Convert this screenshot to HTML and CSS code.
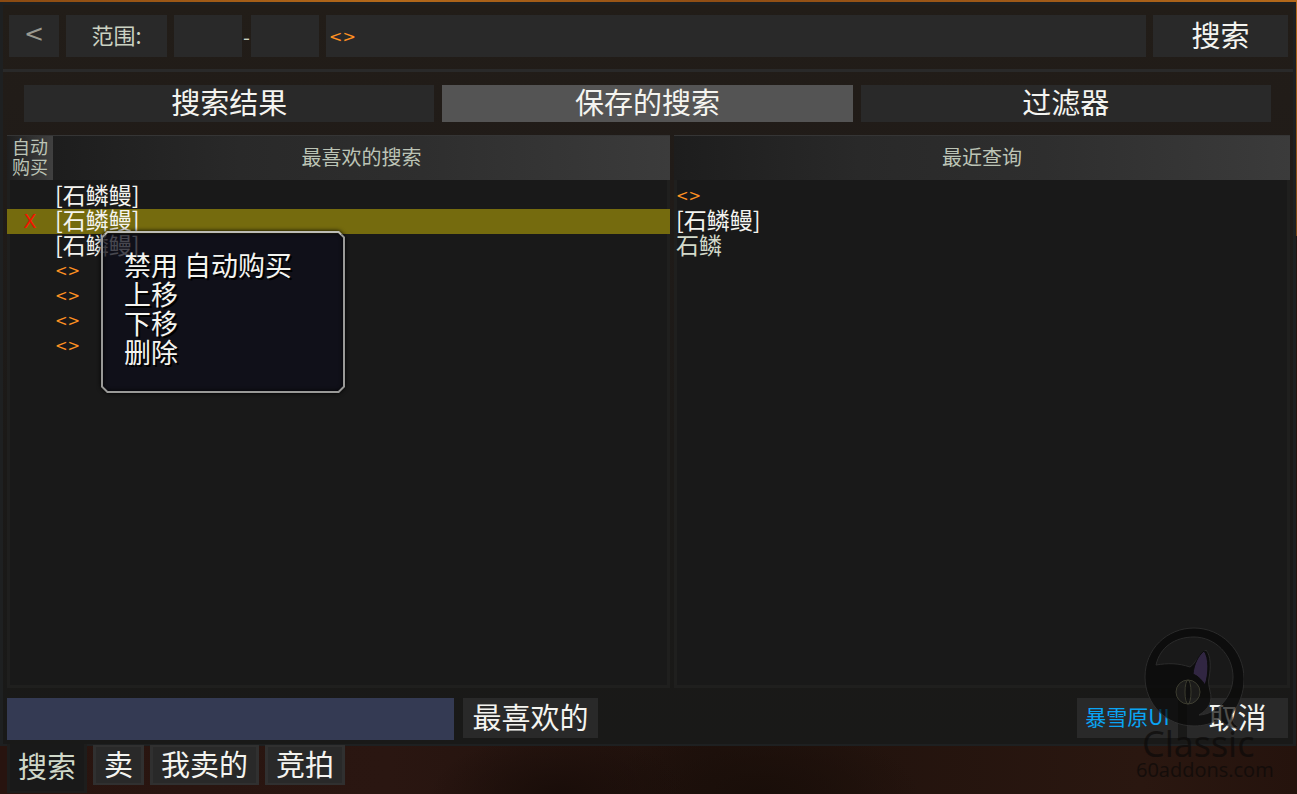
FILE: index.html
```
<!DOCTYPE html>
<html lang="zh-CN">
<head>
<meta charset="utf-8">
<title>搜索</title>
<link rel="stylesheet" href="styles.css">
</head>
<body>
<main class="window">
  <form class="search-bar">
    <button type="button" class="btn back">&lt;</button>
    <button type="button" class="btn range-label">范围:</button>
    <div class="range">
      <input class="field" type="text" aria-label="最低等级">
      <span class="dash">-</span>
      <input class="field" type="text" aria-label="最高等级">
    </div>
    <input class="field query" type="text" value="&lt;&gt;" aria-label="搜索">
    <button type="button" class="btn submit">搜索</button>
  </form>
  <hr class="rule">
  <nav class="views">
    <button type="button" class="btn">搜索结果</button>
    <button type="button" class="btn active">保存的搜索</button>
    <button type="button" class="btn">过滤器</button>
  </nav>
  <div class="panels">
    <section class="panel">
      <table class="list favorites">
        <thead><tr><th class="auto">自动购买</th><th>最喜欢的搜索</th></tr></thead>
        <tbody>
          <tr><td class="mark"></td><td>[石鳞鳗]</td></tr>
          <tr class="selected"><td class="mark">X</td><td>[石鳞鳗]</td></tr>
          <tr><td class="mark"></td><td>[石鳞鳗]</td></tr>
          <tr><td class="mark"></td><td class="empty">&lt;&gt;</td></tr>
          <tr><td class="mark"></td><td class="empty">&lt;&gt;</td></tr>
          <tr><td class="mark"></td><td class="empty">&lt;&gt;</td></tr>
          <tr><td class="mark"></td><td class="empty">&lt;&gt;</td></tr>
        </tbody>
      </table>
      <div class="menu">
        <button type="button">禁用 自动购买</button>
        <button type="button">上移</button>
        <button type="button">下移</button>
        <button type="button">删除</button>
      </div>
    </section>
    <section class="panel">
      <table class="list">
        <thead><tr><th>最近查询</th></tr></thead>
        <tbody>
          <tr><td class="empty">&lt;&gt;</td></tr>
          <tr><td>[石鳞鳗]</td></tr>
          <tr><td class="plain">石鳞</td></tr>
        </tbody>
      </table>
    </section>
  </div>
  <footer class="actions">
    <div class="status"></div>
    <button type="button" class="btn favorite">最喜欢的</button>
    <button type="button" class="btn original">暴雪原UI</button>
    <button type="button" class="btn cancel">取消</button>
  </footer>
</main>
<nav class="tabs">
  <button type="button" class="tab current">搜索</button>
  <button type="button" class="tab">卖</button>
  <button type="button" class="tab">我卖的</button>
  <button type="button" class="tab">竞拍</button>
</nav>
<div class="watermark">
  <svg viewBox="0 0 100 102" aria-hidden="true">
    <path class="ink" fill-rule="evenodd" d="M50 1C23 1 1 22 1 50c0 27 21 49 49 49 9 0 18-2 25-7 7 6 12 11 20 8-5-2-7-6-7-13 7-9 12-21 12-35C100 23 77 1 50 1zM12 38C16 20 31 10 50 10c21 0 39 18 39 40 0 19-15 37-34 38 10-6 14-14 11-24-1-5-2-9-1-13 2-11 2-22-3-28-9 7-11 14-16 17-12-4-22-4-34-2z"/>
    <path class="ear" d="M60 24c5 6 5 23 1 34-3-5-7-9-12-11 1-10 5-18 11-23z"/>
    <circle class="eye" cx="44" cy="65" r="12"/>
    <ellipse class="pupil" cx="44" cy="65" rx="3" ry="12"/>
  </svg>
  <span class="wm-name">Classic</span>
  <span class="wm-site">60addons.com</span>
</div>
</body>
</html>
```
FILE: styles.css
```
* { box-sizing: border-box; }

body {
  margin: 0;
  min-height: 100vh;
  padding: 2px 1px 0 0;
  display: flex;
  flex-direction: column;
  position: relative;
  font-family: "Noto Sans CJK SC", sans-serif;
  color: #f4f4f0;
  background:
    linear-gradient(90deg, #8a4a12, #b4691a 30%, #8f4d14 55%, #a05a18 80%, #b4691a) top / 100% 2px no-repeat,
    linear-gradient(#b4691a, #7a4210) right top / 1px 236px no-repeat,
    radial-gradient(ellipse 130px 60px at 560px 100%, #190d09, transparent),
    radial-gradient(ellipse 160px 70px at 760px 100%, #190e09, transparent),
    linear-gradient(90deg, #28140f, #2a1611 30%, #1f110c 55%, #2a1710 88%, #25130d);
}

button, input { font: inherit; color: inherit; border: 0; margin: 0; padding: 0; }

.window {
  flex: 1;
  display: flex;
  flex-direction: column;
  border: solid #1e2021;
  border-width: 3px 3px 2px;
  background: linear-gradient(#221d18, #201b18 25%, #1b1917 60%, #191918);
}

.btn {
  background: #292929;
  padding-bottom: 5px;
  font-size: 29px;
  line-height: 32px;
  white-space: nowrap;
}

.search-bar {
  display: flex;
  gap: 7px;
  padding: 10px 5px 12px 6px;
}
.search-bar > * { height: 42px; }
.search-bar .back { width: 50px; font: 24px "DejaVu Sans", sans-serif; color: #999990; }
.search-bar .range-label { width: 101px; font-size: 22px; color: #cbd2c2; }
.range { display: flex; }
.field { background: #292929; width: 68px; }
.dash { width: 9px; text-align: center; font-size: 20px; line-height: 44px; color: #cbd2c2; }
.query { flex: 1; min-width: 0; padding-left: 3px; font: 16px "DejaVu Sans", sans-serif; color: #ff9122; }
.submit { width: 135px; }

.rule { width: 100%; height: 3px; margin: 0; border: 0; background: #292929; }

.views {
  display: grid;
  grid-template-columns: repeat(3, 1fr);
  gap: 8px;
  padding: 13px 22px 13px 21px;
}
.views .btn { height: 37px; }
.views .active { background: #545454; }

.panels {
  flex: 1;
  display: grid;
  grid-template-columns: 663fr 616fr;
  gap: 4px;
  padding: 0 3px 0 4px;
}
.panel {
  position: relative;
  background: #191919;
  box-shadow: inset 0 0 0 3px #1f1f1e;
}

.list { width: 100%; border-collapse: collapse; table-layout: fixed; }
.list th {
  height: 45px;
  padding: 0 0 2px;
  font-size: 20px;
  font-weight: 400;
  line-height: 20px;
  color: #bcc4b6;
  background: linear-gradient(90deg, #1d1d1d, #292929 30%, #2e2e2e 60%, #3b3b3b);
  box-shadow: inset 0 1px #353535;
}
.list .auto {
  width: 46px;
  padding: 0 4px 3px;
  font-size: 18px;
  background: linear-gradient(90deg, #1e1e1e, #404040);
}
.list tbody::before { content: ""; display: block; height: 4px; }
.list td { height: 25px; padding: 0 3px 4px 2px; font-size: 23px; line-height: 21px; }
.list .mark { padding: 0; text-align: center; font-family: "DejaVu Sans", sans-serif; font-size: 19px; color: #f51400; }
.list .empty { padding-bottom: 0; font-family: "DejaVu Sans", sans-serif; font-size: 15px; color: #ff9122; }
.list .plain { color: #d3d9ca; }
.list .selected { background: #756b0e; }

.menu {
  position: absolute;
  left: 94px;
  top: 96px;
  width: 244px;
  padding: 17px 21px 25px;
  border: 2px solid #999997;
  border-top-color: #bcbcb6;
  border-radius: 6px;
  corner-shape: bevel;
  background: rgba(14, 14, 25, .75);
  box-shadow: 0 0 4px #000, inset 0 0 4px #000;
}
.menu button {
  display: block;
  width: 100%;
  height: 29px;
  background: none;
  text-align: left;
  font-size: 27px;
  line-height: 29px;
  white-space: nowrap;
  text-shadow: 2px 2px #000;
}

.actions {
  display: flex;
  gap: 9px;
  padding: 10px 5px 4px 4px;
}
.actions .btn { height: 40px; }
.status { width: 447px; height: 42px; background: #343a53; }
.favorite { width: 135px; }
.actions .original { width: 101px; margin-left: auto; font-size: 21px; color: #0aa4f4; }
.cancel { width: 101px; }

.tabs { display: flex; align-items: flex-start; gap: 6px; padding: 0 7px 1px; height: 48px; }
.tab {
  height: 40px;
  margin-top: -1px;
  padding: 0 8px 5px;
  border: solid #303030;
  border-width: 2px 3px;
  background: #292929;
  font-size: 29px;
  line-height: 30px;
  white-space: nowrap;
}
.tab.current {
  height: 49px;
  margin-top: -2px;
  border-color: #1d1d1c;
  border-top: 0;
  background: #191919;
  color: #d0d8c8;
}

.watermark {
  position: absolute;
  right: 26px;
  bottom: 13px;
  width: 135px;
  display: flex;
  flex-direction: column;
  font-family: "Open Sans", sans-serif;
  color: #0c0a09;
  opacity: .7;
  pointer-events: none;
}
.watermark svg { width: 100px; height: 102px; margin-left: 8px; }
.ink { fill: #080808; stroke: #333; stroke-width: 1; }
.ear { fill: #3c2c54; stroke: #080808; stroke-width: 1; }
.eye { fill: #1d1d1b; stroke: #4a4a38; stroke-width: 1; }
.pupil { fill: #0a0a0a; stroke: #4a4a38; stroke-width: 1; }
.wm-name { margin-left: 6px; font-size: 36px; line-height: 30px; }
.wm-site { font-size: 20px; line-height: 22px; }
```
